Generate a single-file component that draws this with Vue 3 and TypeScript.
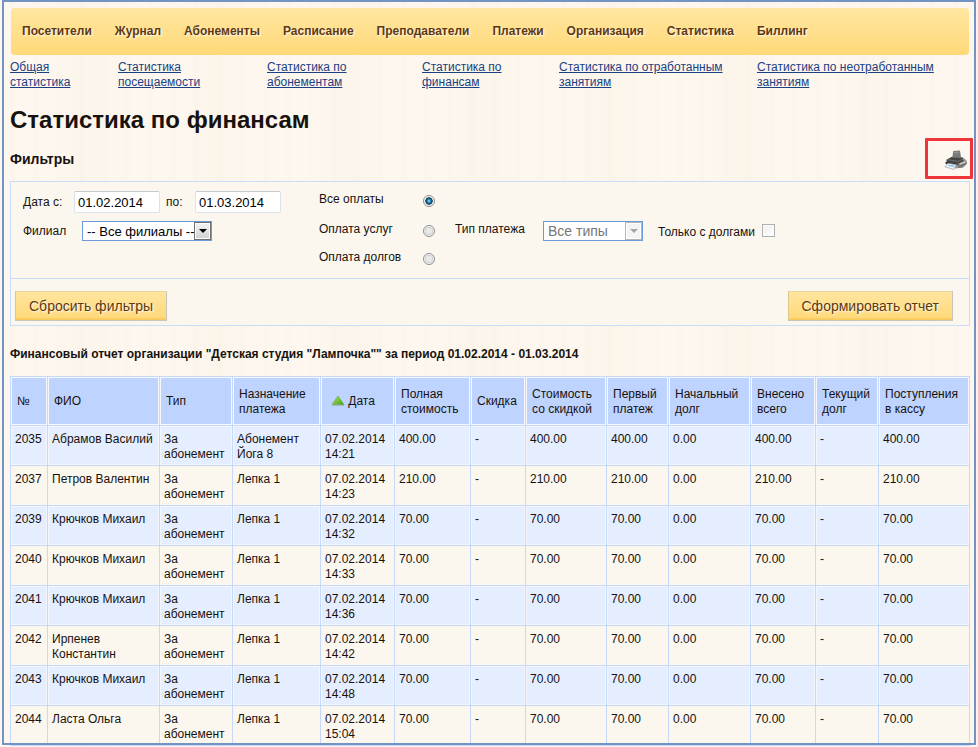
<script setup lang="ts">
import { ref } from 'vue'

interface Payment {
  id: number
  name: string
  purpose: string
  time: string
  amount: string
}

const sections = ['Посетители', 'Журнал', 'Абонементы', 'Расписание', 'Преподаватели', 'Платежи', 'Организация', 'Статистика', 'Биллинг']

const reports = [
  'Общая статистика',
  'Статистика посещаемости',
  'Статистика по абонементам',
  'Статистика по финансам',
  'Статистика по отработанным занятиям',
  'Статистика по неотработанным занятиям',
]

const columns = [
  { title: '№', width: 37 },
  { title: 'ФИО', width: 112 },
  { title: 'Тип', width: 73 },
  { title: 'Назначение платежа', width: 88 },
  { title: 'Дата', width: 74, sorted: true },
  { title: 'Полная стоимость', width: 76 },
  { title: 'Скидка', width: 55 },
  { title: 'Стоимость со скидкой', width: 81 },
  { title: 'Первый платеж', width: 62 },
  { title: 'Начальный долг', width: 82 },
  { title: 'Внесено всего', width: 65 },
  { title: 'Текущий долг', width: 63 },
  { title: 'Поступления в кассу', width: 91 },
]

const payments: Payment[] = [
  { id: 2035, name: 'Абрамов Василий', purpose: 'Абонемент Йога 8', time: '14:21', amount: '400.00' },
  { id: 2037, name: 'Петров Валентин', purpose: 'Лепка 1', time: '14:23', amount: '210.00' },
  { id: 2039, name: 'Крючков Михаил', purpose: 'Лепка 1', time: '14:32', amount: '70.00' },
  { id: 2040, name: 'Крючков Михаил', purpose: 'Лепка 1', time: '14:33', amount: '70.00' },
  { id: 2041, name: 'Крючков Михаил', purpose: 'Лепка 1', time: '14:36', amount: '70.00' },
  { id: 2042, name: 'Ирпенев Константин', purpose: 'Лепка 1', time: '14:42', amount: '70.00' },
  { id: 2043, name: 'Крючков Михаил', purpose: 'Лепка 1', time: '14:48', amount: '70.00' },
  { id: 2044, name: 'Ласта Ольга', purpose: 'Лепка 1', time: '15:04', amount: '70.00' },
]

const kinds = [
  { value: 'all', label: 'Все оплаты' },
  { value: 'services', label: 'Оплата услуг' },
  { value: 'debts', label: 'Оплата долгов' },
]

const dateFrom = ref('01.02.2014')
const dateTo = ref('01.03.2014')
const kind = ref('all')
const onlyDebts = ref(false)

function resetFilters(): void {
  dateFrom.value = '01.02.2014'
  dateTo.value = '01.03.2014'
  kind.value = 'all'
  onlyDebts.value = false
}
</script>

<template>
  <div class="page">
    <nav class="menu">
      <a v-for="s in sections" :key="s" href="#">{{ s }}</a>
    </nav>
    <nav class="reports">
      <div v-for="r in reports" :key="r"><a href="#">{{ r }}</a></div>
    </nav>

    <h1>Статистика по финансам</h1>
    <div class="subhead">
      <h2>Фильтры</h2>
      <button class="print" type="button" aria-label="Печать">
        <svg width="24" height="20" viewBox="0 0 24 20" aria-hidden="true">
          <path d="M2.4 9.6 7 7.4 19 7.4 22.4 10.2 22.8 14 18.6 17.6 12 18.4 2 14Z" fill="#9a9b9b" />
          <path d="M3 9.4 8 6.8 18.4 7.4 19.8 11 14.4 13.8 2.6 11.6Z" fill="#434444" />
          <path d="M9.2 1 16 .4 17 7.4 8.4 7.8Z" fill="#77787a" />
          <path d="M10 2 15 1.4 15.2 3 9.8 3.6Z" fill="#929394" />
          <path d="M3.6 9.6 14 11.4 19 9.2" fill="none" stroke="#777878" stroke-width=".8" />
          <path d="M14.4 13.8 20 11 22.6 11.4 22.6 14 18.6 17.4 14 18Z" fill="#777878" />
          <path d="M15.6 14.2 21.6 11.8" stroke="#d6d6d4" stroke-width="1.4" />
          <path d="M1 12.4 4 11.4 14 13.8 13.6 15.6 2 14Z" fill="#343537" />
          <path d="M4 13.2 12.6 14.8 9.8 19.4 1 16.8Z" fill="#f4faff" stroke="#7f8a92" stroke-width=".6" />
          <path d="M4.8 14.6 10.6 15.8 9.8 17.2 3.8 15.8Z" fill="#85bde6" />
        </svg>
      </button>
    </div>

    <form class="filters" @submit.prevent>
      <div class="fields">
        <div class="general">
          <div class="line">
            <label for="from">Дата с:</label>
            <input id="from" v-model="dateFrom" class="date" type="text">
            <label for="to">по:</label>
            <input id="to" v-model="dateTo" class="date" type="text">
          </div>
          <div class="line branch">
            <label for="branch">Филиал</label>
            <span class="select wide">
              <select id="branch"><option>-- Все филиалы --</option></select>
              <i />
            </span>
          </div>
        </div>
        <div class="kinds">
          <label v-for="k in kinds" :key="k.value">
            <span>{{ k.label }}</span>
            <input v-model="kind" type="radio" name="kind" :value="k.value">
          </label>
        </div>
        <div class="extra">
          <label for="type" class="type">Тип платежа</label>
          <span class="select off">
            <select id="type" disabled><option>Все типы</option></select>
            <i />
          </span>
          <label class="debts">Только с долгами <input v-model="onlyDebts" type="checkbox"></label>
        </div>
      </div>
      <div class="actions">
        <button type="button" @click="resetFilters">Сбросить фильтры</button>
        <button type="submit">Сформировать отчет</button>
      </div>
    </form>

    <h3>Финансовый отчет организации "Детская студия "Лампочка"" за период 01.02.2014 - 01.03.2014</h3>

    <table>
      <colgroup>
        <col v-for="c in columns" :key="c.title" :style="{ width: c.width + 'px' }">
      </colgroup>
      <thead>
        <tr>
          <th v-for="c in columns" :key="c.title" :class="{ sorted: c.sorted }">
            <svg v-if="c.sorted" width="14" height="12" viewBox="0 0 14 12" aria-hidden="true">
              <defs>
                <linearGradient id="up" x1="0" y1="0" x2="1" y2="1">
                  <stop offset="0" stop-color="#b3e86c" />
                  <stop offset="1" stop-color="#3f9f15" />
                </linearGradient>
              </defs>
              <path d="M1 10.5h12" stroke="#a3b6cf" />
              <path d="M7 1 13 9.5H1Z" fill="url(#up)" stroke="#62ad36" stroke-width=".6" />
            </svg>
            {{ c.title }}
          </th>
        </tr>
      </thead>
      <tbody>
        <tr v-for="p in payments" :key="p.id">
          <td>{{ p.id }}</td>
          <td>{{ p.name }}</td>
          <td>За абонемент</td>
          <td>{{ p.purpose }}</td>
          <td>07.02.2014 {{ p.time }}</td>
          <td>{{ p.amount }}</td>
          <td>-</td>
          <td>{{ p.amount }}</td>
          <td>{{ p.amount }}</td>
          <td>0.00</td>
          <td>{{ p.amount }}</td>
          <td>-</td>
          <td>{{ p.amount }}</td>
        </tr>
      </tbody>
    </table>
    <div class="frame" />
  </div>
</template>

<style>
body {
  background: #fdf7ee;
}
</style>

<style scoped>
.page {
  position: relative;
  box-sizing: border-box;
  padding: 8px 8px 1px 10px;
  font-family: "Liberation Sans", Arial, sans-serif;
  font-size: 12px;
  line-height: 15px;
  color: #17120e;
  background:
    repeating-linear-gradient(90deg, rgba(236, 218, 190, 0) 0 9px, rgba(236, 218, 190, .06) 11px 13px, rgba(236, 218, 190, 0) 17px 23px),
    repeating-linear-gradient(90deg, rgba(246, 236, 220, 0) 0 50px, rgba(246, 236, 220, .2) 80px 90px, rgba(246, 236, 220, 0) 131px),
    #fdf7ef;
}
/* Blue outline drawn over the whole page */
.frame {
  position: absolute;
  inset: 0 2px 2px 2px;
  border: 2px solid #7394c3;
  pointer-events: none;
}
.menu {
  display: flex;
  align-items: center;
  gap: 23px;
  height: 47px;
  margin: 0 1px;
  padding: 0 11px;
  border-radius: 4px;
  background: linear-gradient(#ffe6a1, #ffd978);
}
.menu a {
  color: #5f390c;
  font-weight: bold;
  text-decoration: none;
  text-shadow: 1px 1px 2px #fff;
}
.reports {
  display: grid;
  grid-template-columns: 108fr 149fr 155fr 137fr 198fr 213fr;
  margin-top: 5px;
}
.reports div {
  padding-right: 24px;
}
.reports a {
  color: #1b4182;
}
h1 {
  margin: 14px 0 0;
  font-size: 24px;
  line-height: 32px;
}
.subhead {
  position: relative;
  padding: 15px 0 14px;
}
h2 {
  margin: 0;
  font-size: 14px;
  line-height: 16px;
}
.print {
  box-sizing: border-box;
  position: absolute;
  top: 2px;
  right: -3px;
  display: flex;
  justify-content: flex-end;
  align-items: center;
  width: 48px;
  height: 41px;
  padding: 2px 2px 0 0;
  border: 3px solid #f0353a;
  border-radius: 1px;
  background: none;
}
.filters {
  border: 1px solid #cbdcfb;
  background: #fbf7ee;
}
.fields {
  display: flex;
  height: 96px;
  border-bottom: 1px solid #cbdcfb;
}
.general {
  width: 296px;
  padding: 9px 0 0 12px;
}
.line {
  display: flex;
  align-items: center;
}
.line label {
  width: 51px;
}
.line .date + label {
  width: 35px;
  box-sizing: border-box;
  padding-left: 6px;
}
.branch {
  margin-top: 8px;
}
.line.branch label {
  width: 59px;
}
.date {
  box-sizing: border-box;
  width: 86px;
  height: 22px;
  padding: 0 3px;
  border: 1px solid #dde2ea;
  border-top-color: #c4c8d0;
  border-radius: 2px;
  background: #fff;
  font: 13px "Liberation Sans", Arial, sans-serif;
  color: #000;
}
.select {
  position: relative;
  display: block;
  width: 100px;
  height: 20px;
}
.wide {
  width: 130px;
}
.select select {
  appearance: none;
  display: block;
  width: 100%;
  height: 20px;
  padding: 0 16px 0 4px;
  border: 1px solid #6d9bd9;
  border-radius: 0;
  background: #fff;
  font: 14px "Liberation Sans", Arial, sans-serif;
  color: #000;
  opacity: 1;
}
.select.wide select {
  padding-right: 0;
  font-size: 13px;
}
.select i {
  position: absolute;
  top: 1px;
  right: 1px;
  display: flex;
  align-items: center;
  justify-content: center;
  box-sizing: border-box;
  width: 17px;
  height: 18px;
  border: 1px solid #707070;
  background: linear-gradient(#f4f4f4, #d0d0d0);
  box-shadow: inset 0 0 0 1px #fff;
  pointer-events: none;
}
.select i::after {
  content: "";
  border: 4px solid transparent;
  border-top-color: #000;
  border-bottom: 0;
}
.select.off select {
  color: #777;
}
.off i {
  border-color: #b5b5b5;
  background: #f4f4f4;
}
.off i::after {
  border-top-color: #a5a5a5;
}
.kinds {
  display: grid;
  grid-template-rows: 30px 28px 28px;
  align-content: start;
  width: 136px;
  padding-top: 10px;
}
.kinds label {
  display: flex;
}
.kinds span {
  width: 103px;
}
.kinds input {
  appearance: none;
  box-sizing: border-box;
  width: 12px;
  height: 12px;
  margin: 3px 0 0 1px;
  border: 1px solid #8e8f8f;
  border-radius: 50%;
  background: radial-gradient(#e9e9e9 40%, #c8cacc 55%, #fafafa 65%);
}
.kinds input:checked {
  background: radial-gradient(circle closest-side at 50% 50%, #5cc4ee 0 15%, #14608f 45%, #11374f 68%, #f4f4f4 80%);
}
.extra {
  display: flex;
  align-items: flex-start;
  padding-top: 39px;
}
.type {
  width: 88px;
  padding-top: 1px;
}
.debts {
  display: flex;
  gap: 7px;
  margin: 4px 0 0 15px;
}
.debts input {
  appearance: none;
  box-sizing: border-box;
  width: 13px;
  height: 13px;
  margin: -1px 0 0;
  border: 1px solid #aeb0b2;
  background: linear-gradient(135deg, #eee, #fff);
  box-shadow: inset 0 0 0 1px #fbfbfb;
}
.actions {
  display: flex;
  justify-content: space-between;
  padding: 12px 16px 4px 4px;
}
.actions button {
  height: 30px;
  padding: 0 13px;
  border: 1px solid #d9c58e;
  border-color: #e8d79f #c9c5b8 #c9c5b8 #d9c58e;
  background: linear-gradient(#ffe5a0, #ffda7b 90%, #f6c551);
  font: 14px "Liberation Sans", Arial, sans-serif;
  color: #5f390c;
  text-shadow: 1px 1px 2px #fff;
}
h3 {
  margin: 21px 0 14px;
  font-size: 12px;
  line-height: 15px;
}
table {
  width: 100%;
  table-layout: fixed;
  border-collapse: collapse;
}
th,
td {
  box-sizing: border-box;
  border: 1px solid #c6d9fb;
  text-align: left;
}
th {
  height: 49px;
  padding: 1px 5px 0 6px;
  background: #bfd3ff;
  box-shadow: inset 0 0 0 1px #f6f8fd;
  font-weight: normal;
}
.sorted {
  padding-left: 10px;
  white-space: nowrap;
}
.sorted svg {
  vertical-align: -2px;
}
td {
  height: 40px;
  padding: 6px 0 3px 4px;
  vertical-align: top;
  background: #fbf7ee;
}
tbody tr:nth-child(odd) td {
  background: #e5eeff;
  box-shadow: inset 0 0 0 1px #f3f6fc;
}
</style>
